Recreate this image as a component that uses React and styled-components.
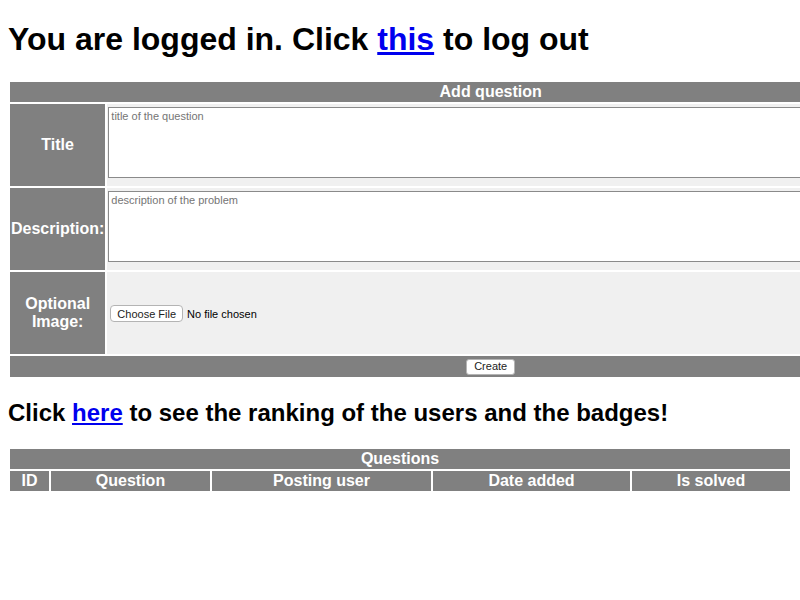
import React from "react";
import styled, { createGlobalStyle } from "styled-components";

const GlobalStyle = createGlobalStyle`
  body {
    margin: 0;
    background: #ffffff;
    color: #000000;
    font-family: "Liberation Sans", Arial, sans-serif;
  }
`;

const Page = styled.div`
  padding: 0 8px 8px;
`;

const Heading = styled.h1`
  font-size: 32px;
  font-weight: bold;
  margin: 21.44px 0;
`;

const SubHeading = styled.h2`
  font-size: 24px;
  font-weight: bold;
  margin: 19.92px 0;
`;

const Link = styled.a`
  color: #0000ee;
  text-decoration: underline;
`;

const Table = styled.table`
  border-spacing: 2px;
  border-collapse: separate;
  width: ${(p) => (p.$full ? "100%" : "auto")};
  font-family: "Liberation Sans", Arial, sans-serif;
`;

const HeadCell = styled.th`
  background: #808080;
  color: #ffffff;
  font-size: 16px;
  font-weight: bold;
  padding: 1px;
  text-align: center;
  vertical-align: middle;
  width: ${(p) => (p.$w ? `${p.$w}px` : "auto")};
`;

const FieldCell = styled.td`
  background: #f0f0f0;
  padding: 1px;
  height: 80px;
  vertical-align: middle;
`;

const ActionCell = styled.td`
  background: #808080;
  padding: 1px;
  text-align: center;
`;

const TextBox = styled.textarea`
  display: block;
  box-sizing: border-box;
  width: 862px;
  height: 71px;
  margin: 2px 0 7px;
  padding: 2px;
  border: 1px solid #8a8a8a;
  background: #ffffff;
  font-family: "Liberation Sans", Arial, sans-serif;
  font-size: 11px;
  resize: none;
  &::placeholder {
    color: #757575;
  }
`;

const FileInput = styled.input`
  margin: 0 0 0 2px;
  font-family: "Liberation Sans", Arial, sans-serif;
  font-size: 11px;
  color: #000000;
  &::file-selector-button {
    font-family: "Liberation Sans", Arial, sans-serif;
    font-size: 11px;
    height: 17px;
    padding: 0 6px;
    margin: 0 4px 0 0;
    background: #ffffff;
    border: 1px solid #b4b4b4;
    border-radius: 4px;
    color: #222222;
  }
`;

const CreateButton = styled.button`
  display: block;
  box-sizing: border-box;
  height: 16px;
  margin: 2px auto 1px;
  padding: 0 7px;
  background: #ffffff;
  border: 1px solid #b4b4b4;
  border-radius: 3px;
  font-family: "Liberation Sans", Arial, sans-serif;
  font-size: 11px;
  line-height: 13px;
  color: #222222;
`;

const questionColumns = [
  { label: "ID", w: 37 },
  { label: "Question", w: 157 },
  { label: "Posting user", w: 217 },
  { label: "Date added", w: 195 },
  { label: "Is solved", w: 156 },
];

export default function App() {
  return (
    <Page>
      <GlobalStyle />
      <Heading>
        You are logged in. Click <Link href="#">this</Link> to log out
      </Heading>

      <form onSubmit={(e) => e.preventDefault()}>
        <Table>
          <tbody>
            <tr>
              <HeadCell colSpan={2}>Add question</HeadCell>
            </tr>
            <tr>
              <HeadCell $w={94}>Title</HeadCell>
              <FieldCell>
                <TextBox placeholder="title of the question" />
              </FieldCell>
            </tr>
            <tr>
              <HeadCell $w={94}>Description:</HeadCell>
              <FieldCell>
                <TextBox placeholder="description of the problem" />
              </FieldCell>
            </tr>
            <tr>
              <HeadCell $w={94}>
                Optional
                <br />
                Image:
              </HeadCell>
              <FieldCell>
                <FileInput type="file" />
              </FieldCell>
            </tr>
            <tr>
              <ActionCell colSpan={2}>
                <CreateButton type="submit">Create</CreateButton>
              </ActionCell>
            </tr>
          </tbody>
        </Table>
      </form>

      <SubHeading>
        Click <Link href="#">here</Link> to see the ranking of the users and the
        badges!
      </SubHeading>

      <Table $full>
        <tbody>
          <tr>
            <HeadCell colSpan={questionColumns.length}>Questions</HeadCell>
          </tr>
          <tr>
            {questionColumns.map((c) => (
              <HeadCell key={c.label} $w={c.w}>
                {c.label}
              </HeadCell>
            ))}
          </tr>
        </tbody>
      </Table>
    </Page>
  );
}
